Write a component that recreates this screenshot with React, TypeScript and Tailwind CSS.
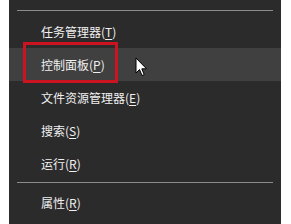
import React from "react";

const rows: { label: string; key: string; active?: boolean }[] = [
  { label: "任务管理器", key: "T" },
  { label: "控制面板", key: "P", active: true },
  { label: "文件资源管理器", key: "E" },
  { label: "搜索", key: "S" },
  { label: "运行", key: "R" },
];

function Row({ label, k, active }: { label: string; k: string; active?: boolean }) {
  return (
    <div
      className={`h-[33px] flex items-center pl-[32px] text-[12px] text-[#f0f0f0] ${
        active ? "bg-[#404040]" : ""
      }`}
    >
      <span>
        {label}(<span className="underline underline-offset-2">{k}</span>)
      </span>
    </div>
  );
}

export default function App() {
  return (
    <div
      className="w-[291px] h-[224px] bg-white pl-[9px] pr-[10px] overflow-hidden"
      style={{ fontFamily: '"Noto Sans CJK SC", "Liberation Sans", sans-serif' }}
    >
      <div className="relative h-full bg-[#2b2b2b] flex flex-col">
        <div className="mt-[10px] mx-[8px] h-px bg-[#8c8c8c]" />
        <div className="mt-[4px]">
          {rows.map((r) => (
            <Row key={r.label} label={r.label} k={r.key} active={r.active} />
          ))}
        </div>
        <div className="mt-[2px] mb-[3px] mx-[8px] h-px bg-[#8c8c8c]" />
        <Row label="属性" k="R" />

        {/* red highlight box */}
        <div className="absolute left-[14px] top-[42px] w-[95px] h-[41px] border-[3px] border-[#cc1420]" />

        {/* mouse cursor */}
        <svg
          className="absolute left-[126px] top-[57px]"
          width="13"
          height="21"
          viewBox="0 0 13 21"
        >
          <path
            d="M1 1 L1 16 L4.5 12.5 L7 18.5 L9.2 17.6 L6.8 11.8 L11.5 11.8 Z"
            fill="#ffffff"
            stroke="#000000"
            strokeWidth="1"
            strokeLinejoin="miter"
          />
        </svg>
      </div>
    </div>
  );
}
